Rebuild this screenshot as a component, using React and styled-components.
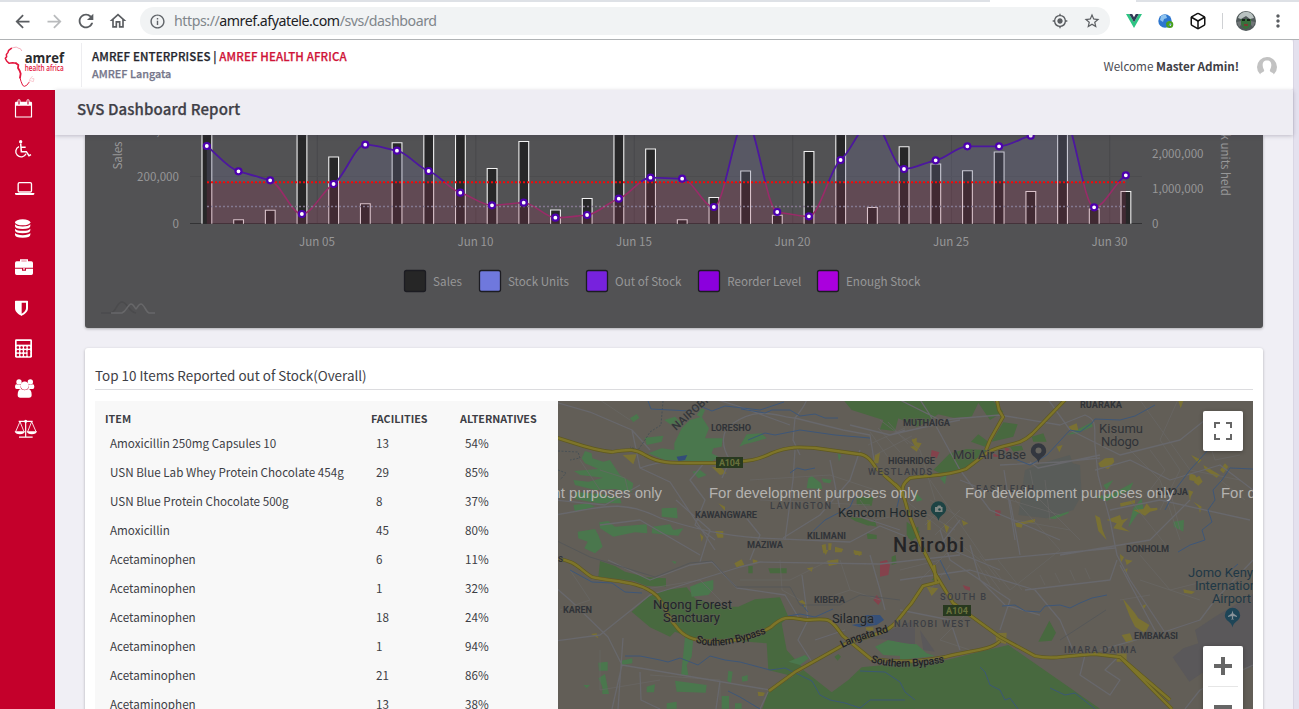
import React from "react";
import styled, { createGlobalStyle, css } from "styled-components";
import {
  MdArrowBack,
  MdArrowForward,
  MdRefresh,
  MdOutlineHome,
  MdInfoOutline,
  MdMyLocation,
  MdStarBorder,
  MdMoreVert,
} from "react-icons/md";
import { Box } from "lucide-react";

const SANS = `"Noto Sans CJK SC", "Noto Sans", sans-serif`;

const GlobalStyle = createGlobalStyle`
  * { box-sizing: border-box; }
  html, body { margin: 0; height: 100%; overflow: hidden; }
  body { font-family: ${SANS}; background: #efeef4; color: #3d3e45; }
  svg { display: block; }
`;

/* ---------- browser chrome ---------- */

const Window = styled.div`
  display: flex;
  flex-direction: column;
  width: 1299px;
  height: 709px;
  overflow: hidden;
`;

const TabEdge = styled.div`
  height: 2px;
  display: flex;
  background: #fff;
  flex: none;
`;

const TabStrip = styled.span`
  width: ${(p) => p.$w}px;
  margin-left: ${(p) => p.$gap || 0}px;
  background: #dee1e6;
`;

const BrowserBar = styled.div`
  height: 38px;
  flex: none;
  display: flex;
  align-items: center;
  padding: 1px 5px 0 6px;
  background: #fff;
  border-bottom: 1px solid #b0b3b5;
`;

const BarButton = styled.div`
  width: 32px;
  height: 30px;
  display: flex;
  align-items: center;
  justify-content: center;
  color: ${(p) => p.$color || "#5a5d61"};
`;

const AddressPill = styled.div`
  flex: 1;
  height: 28px;
  margin: 0 8px 0 6px;
  padding: 0 2px 0 9px;
  border-radius: 14px;
  background: #f1f3f4;
  color: #5f6368;
  display: flex;
  align-items: center;
`;

const Url = styled.div`
  flex: 1;
  margin-left: 8px;
  font: 14.2px/20px "Noto Sans", sans-serif;
  letter-spacing: -0.45px;
  color: #80868b;
  b { font-weight: 400; color: #202124; }
`;

const BarDivider = styled.div`
  width: 1px;
  height: 16px;
  margin: 0 7px 0 8px;
  background: #cfd1d4;
`;

/* ---------- application shell ---------- */

const Page = styled.div`
  flex: 1;
  min-height: 0;
  display: flex;
`;

const Workspace = styled.div`
  flex: 1;
  min-width: 0;
  display: flex;
  flex-direction: column;
`;

const ScrollGutter = styled.div`
  width: 6px;
  background: #e4e1ee;
  border-left: 1px solid #d9d6e4;
`;

const Header = styled.header`
  height: 50px;
  flex: none;
  display: flex;
  align-items: center;
  background: #fff;
  border-radius: 0 3px 3px 0;
`;

const LogoBox = styled.div`
  width: 82px;
  height: 44px;
  border-right: 1px solid #ededf0;
`;

const Company = styled.div`
  flex: 1;
  padding: 0 0 1px 10px;
  display: flex;
  flex-direction: column;
`;

const CompanyLine = styled.div`
  font-size: ${(p) => (p.$muted ? 10.8 : 11.5)}px;
  line-height: 17px;
  font-weight: 500;
  color: ${(p) => (p.$muted ? "#75768a" : "#25262e")};
  -webkit-text-stroke: 0.25px currentColor;
  letter-spacing: ${(p) => (p.$muted ? 0.02 : 0.12)}px;
  white-space: pre;
  em { font-style: normal; color: #cf1338; }
`;

const Welcome = styled.div`
  font-size: 11.7px;
  letter-spacing: -0.02px;
  line-height: 18px;
  color: #4a4b52;
  margin: 2px 18px 0 0;
  b { font-weight: 700; color: #3f4046; }
`;

const UserIcon = styled.svg`
  width: 20px;
  height: 20px;
  margin: 3px 16px 0 0;
`;

const Body = styled.div`
  flex: 1;
  min-height: 0;
  display: flex;
`;

const Sidebar = styled.nav`
  width: 55px;
  flex: none;
  background: #c4002b;
`;

const SideItem = styled.div`
  height: 40px;
  padding-left: 12px;
  color: #fff;
`;

const Main = styled.main`
  flex: 1;
  min-width: 0;
  display: flex;
  flex-direction: column;
`;

const TitleBar = styled.div`
  height: 45px;
  flex: none;
  padding: 7px 0 0 22px;
  background: #eeedf3;
  box-shadow: 0 1px 4px rgba(60, 55, 80, 0.28);
  position: relative;
  z-index: 1;
  font-size: 15px;
  letter-spacing: 0.13px;
  -webkit-text-stroke: 0.25px currentColor;
  line-height: 24px;
  font-weight: 500;
  color: #3f4047;
`;

const Content = styled.div`
  flex: 1;
  min-height: 0;
  overflow: hidden;
  padding: 0 30px;
  background: #f0eff5;
`;

const cardShadow = css`
  box-shadow: 0 1px 3px rgba(0, 0, 0, 0.28);
`;

const ChartCard = styled.section`
  height: 193px;
  background: #525254;
  border-radius: 0 0 3px 3px;
  overflow: hidden;
  ${cardShadow}
`;

const Card = styled.section`
  margin-top: 20px;
  height: 400px;
  padding: 15px 10px 0;
  background: #fff;
  border-radius: 3px;
  ${cardShadow}
`;

const CardTitle = styled.h4`
  margin: 0 0 11px;
  height: 27px;
  font-size: 13.43px;
  line-height: 24px;
  font-weight: 400;
  border-bottom: 1px solid #dcdcdf;
`;

const Split = styled.div`
  display: flex;
  height: 340px;
`;

const Table = styled.div`
  width: 463px;
  flex: none;
  padding: 9px 10px 0;
  background: #f8f8f8;
`;

const Row = styled.div`
  display: grid;
  grid-template-columns: 266px 89px 1fr;
  align-items: center;
  height: ${(p) => (p.$head ? 18 : 29)}px;
  padding-left: ${(p) => (p.$head ? 0 : 5)}px;
  font-size: ${(p) => (p.$head ? 10.75 : 11.65)}px;
  font-weight: ${(p) => (p.$head ? 700 : 400)};
  line-height: 18px;
  white-space: nowrap;
`;

const MapBox = styled.div`
  flex: 1;
  position: relative;
  overflow: hidden;
  background: #625e57;
`;

const MapControl = styled.div`
  position: absolute;
  right: 10px;
  top: ${(p) => p.$top}px;
  width: 40px;
  height: ${(p) => p.$h}px;
  background: #fff;
  border-radius: 2px;
  box-shadow: 0 1px 4px rgba(0, 0, 0, 0.3);
  color: #666;
`;

/* ---------- sidebar icons ---------- */

const RED = "#c4002b";
const line = { fill: "none", stroke: "currentColor", strokeWidth: 4 };

const sideIcons = [
  <g key="calendar">
    <path d="M10.5 40H58.5V81H10.5Z" {...line} strokeWidth="3.5" strokeLinejoin="round" />
    <path d="M9 38q0-3 3-3H57q3 0 3 3v9H9z" />
    <path d="M21 32V42M48 32V42" stroke="currentColor" strokeWidth="9" strokeLinecap="round" />
    <path d="M21 32V42M48 32V42" stroke={RED} strokeWidth="3.5" strokeLinecap="round" />
  </g>,
  <g key="wheelchair">
    <circle cx="26" cy="35" r="5" />
    <path d="M26 40L28 65H43L51 77L57 74M27 52H41" {...line} strokeWidth="4.5" />
    <path d="M21 50A16 16 0 1 0 42 71" {...line} />
  </g>,
  <g key="laptop">
    <rect x="18.500" y="38" width="40" height="28" rx="4" {...line} />
    <path d="M9 69H67V72Q67 75 62 75H14Q9 75 9 72Z" />
  </g>,
  <g key="database">
    <ellipse cx="32" cy="37" rx="23" ry="9" />
    {[43, 56, 69].map((y) => (
      <path key={y} d={`M9 ${y}q6 6.500 23 6.500t23-6.500v5q0 9-23 9t-23-9z`} />
    ))}
  </g>,
  <g key="briefcase">
    <path d="M26 36V30H46V36" {...line} />
    <path d="M9 39q0-5 5-5H58q5 0 5 5V53H9ZM9 56H30v6H42v-6H63V70q0 5-5 5H14q-5 0-5-5z" />
    <path d="M34 54h4v5h-4z" />
  </g>,
  <path
    key="shield"
    fillRule="evenodd"
    d="M9 34Q9 32 11 32H46Q48 32 48 34V55C48 67 36 74 28.500 78C21 74 9 67 9 55ZM29 38V71C35 68 42 63 42 55V38Z"
  />,
  <g key="calculator">
    <rect x="9" y="28" width="51" height="55" rx="4" />
    <path d="M14 33H55V44H14Z" fill={RED} />
    {[49, 60, 71].map((y) =>
      [14, 25, 36, 47].map((x) => (
        <rect key={`${x}-${y}`} x={x} y={y} width="7.500" height="7.500" rx="3" fill={RED} />
      ))
    )}
    <rect x="47" y="60" width="7.500" height="18.500" rx="3" fill={RED} />
  </g>,
  <g key="users">
    <circle cx="21" cy="36" r="8" />
    <circle cx="55" cy="36" r="8" />
    <path d="M9 50Q9 43 14 43Q20 47 27 44Q23 52 28 57H14Q9 57 9 50ZM67 50Q67 43 62 43Q56 47 49 44Q53 52 48 57H62Q67 57 67 50Z" />
    <circle cx="38" cy="47" r="12.500" />
    <path d="M17 75Q17 58 27 57Q38 64 49 57Q59 58 59 75Q59 83 51 83H25Q17 83 17 75Z" />
  </g>,
  <g key="balance">
    <path d="M41 34V81M20 34H62M21 81.500H62" {...line} strokeWidth="3.500" />
    <circle cx="41" cy="34" r="4.500" />
    <path d="M24 35L11 65M24 35L36 65M59 35L47 65M59 35L72 65" {...line} strokeWidth="2.600" />
    <path d="M8 64H39Q37 73 23.500 73T8 64ZM44 64H75Q73 73 59.500 73T44 64Z" />
  </g>,
];

/* ---------- header logo ---------- */

function Logo() {
  return (
    <svg width="81" height="47" viewBox="0 127 243 141">
      <g fill="none" strokeLinecap="round" strokeLinejoin="round" stroke="#e3173e">
        <path d="M65 150L61 144L53 142L50 139L40 141L34 143" strokeWidth="2" stroke="#ef8297" />
        <path d="M34 143L26 149L24 155L19 162L20 168L16 173L20 181L27 188L38 186L48 188" strokeWidth="4.500" />
        <path d="M48 188L55 193L54 202L59 210L62 219L60 231" strokeWidth="5.500" />
        <path d="M60 231L63 242L68 254L73 257L80 254L87 245" strokeWidth="3" />
        <path d="M87 245L90 235L97 227M91 240L100 243L102 234L96 234" strokeWidth="1.800" stroke="#f5a9b6" />
      </g>
      <text x="74" y="187" textLength="118" lengthAdjust="spacingAndGlyphs" fontFamily="Open Sans, sans-serif" fontWeight="700" fontSize="45" fill="#2b2a2c">amref</text>
      <text x="74" y="211" textLength="117" lengthAdjust="spacingAndGlyphs" fontFamily="Open Sans, sans-serif" fontWeight="600" fontSize="24" fill="#e3173e">health africa</text>
    </svg>
  );
}

/* ---------- sales / stock chart ---------- */

const BASE = 223.7;
const barTops = [
  120, 219.7, 210.3, 120, 157, 203.7, 142.7, 120, 120, 168.5, 141.5, 210, 198.5, 120, 149,
  219.7, 197.5, 171, 215.3, 151.5, 120, 207.5, 146.7, 164, 170.7, 152, 191.5, 120, 209, 191.5,
];
const stock = [
  146, 171.3, 180.3, 214, 184, 144.7, 150.7, 171, 192.7, 205.3, 202.7, 217.7, 215, 198.7, 177.7,
  178.7, 207, 120, 212, 216.3, 160, 121, 169, 160.3, 146.3, 146.3, 135.7, 114, 207.3, 175.3,
];
const STEP = 31.69;
const px = (i) => 206.8 + STEP * i;

/* Monotone cubic interpolation through the daily points; flat at local extremes. */
function curve(ys) {
  const d = ys.slice(1).map((y, i) => y - ys[i]);
  const m = ys.map((_, i) => {
    if (i === 0 || i === ys.length - 1) return i === 0 ? d[0] : d[d.length - 1] * 0.6;
    const a = d[i - 1];
    const b = d[i];
    return a * b <= 0 ? 0 : Math.sign(a) * Math.min(Math.abs(a), Math.abs(b), Math.abs(a + b) / 4);
  });
  return ys.reduce((path, y, i) => {
    if (i === 0) return `M${px(0)} ${y}`;
    return `${path}C${px(i - 1) + STEP / 3} ${ys[i - 1] + m[i - 1] / 3} ${px(i) - STEP / 3} ${y - m[i] / 3} ${px(i)} ${y}`;
  }, "");
}

const legend = [
  [404.5, "#262626", "Sales", 433, 29],
  [479.5, "#6f78dd", "Stock Units", 508, 61],
  [586.5, "#7722dd", "Out of Stock", 615, 66.5],
  [698.5, "#8b00dd", "Reorder Level", 727.3, 74],
  [817.5, "#aa00dd", "Enough Stock", 846, 74.5],
];

function Chart() {
  const path = curve(stock);
  const area = `${path}L${px(29)} ${BASE}L${px(0)} ${BASE}Z`;
  return (
    <svg width="1178" height="193" viewBox="85 135 1178 193" fontFamily={SANS} fontSize="11.600" fill="#979798">
      <defs>
        <clipPath id="above"><rect x="85" y="100" width="1178" height="82" /></clipPath>
        <clipPath id="below"><rect x="85" y="182" width="1178" height="60" /></clipPath>
      </defs>
      {[317.3, 475.8, 634.3, 792.7, 951.5, 1109.700].map((x) => (
        <path key={x} d={`M${x} 130V223`} stroke="#49494b" />
      ))}
      <path d="M190 176.500H1142" stroke="#4c4c4e" />
      <path d="M190 223.500H1142" stroke="#333335" />
      {barTops.map((t, i) => (
        <path key={i} d={`M${px(i) - 4.8} ${BASE}V${t}h9.800V${BASE}`} fill="#272728" stroke="#f2f2f2" strokeWidth="1.100" />
      ))}
      <path d={area} clipPath="url(#above)" fill="#67678c" fillOpacity="0.300" />
      <path d={area} clipPath="url(#below)" fill="#8e3552" fillOpacity="0.250" />
      <path d={path} clipPath="url(#above)" fill="none" stroke="#4c179f" strokeWidth="1.800" />
      <path d={path} clipPath="url(#below)" fill="none" stroke="#992b68" strokeWidth="1.600" />
      <path d="M207 206.500H1126" stroke="#83788f" strokeWidth="1.700" strokeDasharray="2 2" />
      <path d="M207 182.200H1126" stroke="#f50808" strokeWidth="2" strokeDasharray="2 2" />
      {stock.map((y, i) => (
        <circle key={i} cx={px(i)} cy={y} r="3" fill="#fff" stroke="#4d00ae" strokeWidth="2.200" />
      ))}
      <text x="137" y="181" textLength="42">200,000</text>
      <text x="137" y="134.500" textLength="42">400,000</text>
      <text x="179" y="228" textAnchor="end">0</text>
      <text x="1152" y="158" textLength="51.500">2,000,000</text>
      <text x="1152" y="193" textLength="51.500">1,000,000</text>
      <text x="1152" y="228">0</text>
      <text transform="translate(122 169.500) rotate(-90)" textLength="28">Sales</text>
      <text transform="translate(1221 196) rotate(90)" textAnchor="end">Stock units held</text>
      {["05", "10", "15", "20", "25", "30"].map((d, i) => (
        <text key={d} x={299 + 158.500 * i} y="246" textLength="36">{`Jun ${d}`}</text>
      ))}
      {legend.map(([x, color, label, tx, w]) => (
        <g key={label}>
          <rect x={x} y="270.500" width="21" height="21" rx="2" fill={color} stroke="#1c1c22" strokeWidth="1.300" />
          <text x={tx} y="286" textLength={w}>{label}</text>
        </g>
      ))}
      <g fill="none" strokeWidth="1.600">
        <path d="M101 313H111C116 312 117 302 122 302S129 312 136 313" stroke="#4b4b4d" />
        <path d="M111 313H122C127 311 128 304 131 304S135 309 136 309S138 304 141 304C144 304 146 312 149 313H155" stroke="#676769" />
      </g>
    </svg>
  );
}

/* ---------- map ---------- */

const G1 = "#4a774d";
const G2 = "#48693f";
const Y = "#7a7133";
const R = "#84424c";

const Quadrant = ({ x, y, children }) => (
  <g transform={`translate(${x} ${y}) scale(0.33333)`}>{children}</g>
);

const labelStroke = { stroke: "#625e57", strokeOpacity: 0.6, strokeWidth: 1.5, paintOrder: "stroke" };

const Label = ({ x, y, w, size = 9.2, weight = 700, color = "#303338", rotate, children }) => (
  <text
    x={rotate ? undefined : x}
    y={rotate ? undefined : y}
    transform={rotate ? `translate(${x} ${y}) rotate(${rotate})` : undefined}
    textLength={w}
    fontSize={size}
    fontWeight={weight}
    fill={color}
    {...labelStroke}
  >
    {children}
  </text>
);

const RoadName = ({ id, d, w, children }) => (
  <>
    <path id={id} d={d} fill="none" />
    <text fontSize="10.500" fontWeight="500" fill="#202225" {...labelStroke}>
      <textPath href={`#${id}`} textLength={w}>{children}</textPath>
    </text>
  </>
);

const Pin = ({ x, y, color, children }) => (
  <g transform={`translate(${x} ${y})`}>
    <path d="M0 12C-.8 6-7.700 5.500-7.700 0A7.700 7.700 0 0 1 7.700 0C7.700 5.500 .8 6 0 12Z" fill={color} />
    <g transform="translate(0 6)">{children}</g>
  </g>
);

const highways = [
  "M555 437C575 443 590 450 612 452C630 449 636 449 645 455C660 464 670 463 715 463C752 462 760 459 772 453C790 446 800 447 815 448L858 454C867 454 872 462 876 468L900 489",
  "M996 396L999 410L1003 417L990 440L986 450M1065 400L1032 434C1018 447 1008 442 988 452L966 469C945 477 925 475 910 478C902 484 902 488 903 495",
  "M895 484C903 491 905 500 908 512L921 545L936 575L953 603L1000 637L1035 656C1055 660 1070 655 1095 654L1120 657L1172 709M1120 657L1170 700",
  "M555 559C575 559 580 570 592 577C612 582 640 580 657 596C667 608 668 618 675 625C684 638 694 640 708 641C746 643 762 632 771 627C785 614 790 618 807 620C832 618 830 619 843 636L871 659C910 664 925 660 945 657C970 650 990 651 1000 641",
  "M769 691L795 672L845 644L880 633C895 628 900 616 911 604L923 586L939 582",
  "M934 565L936 583",
];

const minorRoads = [
  "M555 402L590 412L632 430L650 450M632 430L640 468L670 482L715 550M640 468C680 455 680 465 700 462M722 478L730 460C720 445 722 430 732 424C760 404 780 418 795 418C810 400 806 398 808 395M795 418L793 440L800 455M795 418L843 430L870 435L874 460M795 450L793 480L785 540M700 395L735 405L790 425M850 425L890 435L905 430M890 435L920 428L960 420",
  "M555 515C600 508 620 498 660 518C700 530 720 535 760 538L850 542L880 526L905 536M676 500L710 530L700 562M740 510L760 535L750 560M600 525L640 520L700 555M705 462L690 480L705 500L695 525L715 540M783 538L820 515L850 480L860 450M830 460L840 510L900 530M555 500L605 505L640 485",
  "M555 587L570 600L608 637L622 665L770 690M555 641L600 635L650 595L740 567L760 562L880 564L960 555M608 560L650 580L690 565L712 562L737 588L785 595L800 620M622 665L612 709M623 638L618 709M640 672L641 700L660 709M720 681L716 709M768 692L760 709M802 575L808 620L798 640L812 662M870 555L880 590L885 610M815 640L845 630",
  "M917 395L930 415L960 470L990 510L1060 540M900 400L940 420L1000 415L1060 425L1085 415C1098 420 1094 428 1095 445L1098 475L1110 520L1117 555L1130 580L1170 640M1045 395L1070 430L1120 455L1180 440L1205 420M1030 462L1038 468L1100 455M1000 465L1060 462L1100 458M1095 470L1130 460L1170 480L1220 465L1253 490M1110 510L1160 500L1250 520M1004 470L1015 540M960 480L1010 500L1020 555M960 520L940 545L1000 570",
  "M900 580L970 570L1035 590L1060 620L1075 655M970 545L980 580L1005 605L1040 615M900 610L950 620L960 650M985 560L1115 548M1025 590L1110 580L1117 560M1120 565L1160 640M1100 650L1170 630L1200 620L1215 600L1253 560M1085 655L1080 675L1110 695L1120 680L1105 670L1120 655M1253 665L1200 690L1185 709M1060 555L1150 540L1190 500M940 530L950 560L1010 600L1000 630",
];

const texture = [
  "M580 460L600 490L640 495M570 570L590 600L560 610M630 420L600 400M750 480L830 475L875 490M760 500L870 505M740 580L790 580L830 560M880 420L920 450L935 500M905 500L980 560M930 480L985 560M1110 430L1160 480L1180 540M1140 400L1190 470L1240 480M1130 500L1170 550M1170 490L1180 530M1180 395L1160 440L1180 470L1160 510M1015 500L1060 550L1010 590M1030 490L1080 540M1140 580L1200 600M1140 555L1170 590L1210 580",
  "M640 590L700 580L730 610M600 650L600 690L660 680M650 675L720 680L720 700M820 600L850 590L880 600M840 560L850 590M985 570L1000 590M990 565L1010 590M998 560L1022 590M1040 575L1045 585M1055 573L1060 583M1070 570L1075 581M1085 568L1090 579M940 560L920 580M950 565L930 590M970 610L940 640L970 650M900 570L940 560L960 540M1120 600L1150 595",
  "M870 432L890 460M878 428L900 452M888 422L908 444M868 445L905 428M875 455L912 436M1010 500L1060 515M1015 520L1070 530M1030 470L1036 500M1045 480L1050 520M920 510L955 530M930 500L965 520M925 525L945 505M935 535L960 510M975 560L990 585M980 556L1000 582M600 470L625 478L630 500M780 560L782 590L800 600M860 500L875 520L900 515M1205 430L1215 460L1240 455M1220 480L1245 500M1150 450L1165 470L1150 490",
];

const watermarkX = [453, 709, 965, 1221];

function MapDrawing() {
  return (
    <svg width="695" height="308" viewBox="558 401 695 308" fontFamily="Roboto, sans-serif">
      <rect x="558" y="401" width="695" height="308" fill="#625e57" />
      <Quadrant x={555} y={395}>
        <g fill={G1}>
          <path d="M270 128L325 122L320 140L275 150ZM328 75L360 65L385 90L360 98ZM225 70L245 57L253 68L235 82ZM358 145L380 100L405 75L440 65L462 100L450 130L503 130L500 155L475 160L470 175L490 185L470 200L330 195L280 175L320 160L358 165ZM425 60L440 40L450 45L440 68ZM553 155L575 118L620 115L635 130L600 140L570 148Z" />
          <path d="M80 190L90 168L110 175L112 190L145 200L165 195L195 240L235 265L230 292L180 282L120 285L60 270L55 255L100 260L145 248L75 240L57 228L130 222L90 205ZM60 290L140 298L195 310L200 325L130 325L60 312ZM55 330L100 325L120 335L60 350ZM68 410L120 402L130 420L143 455L120 475L88 460L98 440L70 430ZM133 382L160 378L180 395L275 388L277 415L240 412L175 425L135 400ZM320 340L365 338L368 370L320 365ZM292 395L345 388L355 405L385 400L370 422L290 415ZM412 230L435 225L455 240L430 250ZM760 250L770 242L798 265L802 282L755 280ZM800 250L830 255L825 265L805 262ZM848 175L858 180L852 200Z" />
        </g>
        <g fill={G2}>
          <path d="M868 18H1200L1120 80L1085 95L1030 70L1020 108L975 103L985 75L890 45ZM905 305L955 305L950 332L905 330ZM940 390L960 375L965 395ZM1060 410L1090 395V430H1060ZM880 365L920 370L960 385L940 392L900 378ZM935 415L965 420V432H938Z" />
        </g>
        <g fill={Y}>
          <path d="M203 180L245 178L235 208ZM470 215L500 220L515 235L495 240ZM480 408H505V428H488ZM490 325L510 335V348ZM435 415L445 425L440 440ZM800 450L812 447L815 475H805ZM820 445L830 445L828 465H820ZM840 455L865 462L860 472H840ZM895 465L920 470V480H900ZM960 180L975 172L970 205H955ZM1070 135L1085 128V165Z" />
        </g>
        <path fill="#334c79" d="M365 185L397 180L390 195L370 198Z" />
      </Quadrant>
      <Quadrant x={900} y={395}>
        <g fill={G2}>
          <path d="M0 18H280L310 50L270 75L235 24L215 65L160 68L100 55L50 38L0 30ZM275 140L310 82L353 88L340 125ZM213 140L235 118L265 140L255 155ZM100 225L150 175L200 162L260 165L240 190L190 225L120 235ZM395 125L430 115L440 140H400ZM20 380L60 410L35 440L20 420ZM330 155L365 152L370 165L340 170Z" />
        </g>
        <g fill={G1}>
          <path d="M445 370L510 340L505 355L465 372ZM500 120L575 82L578 95L530 115ZM585 305L640 295L700 262L690 285L620 318ZM610 270L640 255L620 285ZM700 340L725 310L732 350L712 358L685 398ZM820 380L852 375L850 410L822 395ZM120 250L140 240L135 268ZM45 290L68 315L50 320Z" />
          <path fill="#595c59" d="M375 225L440 200L510 180L518 205L540 210L545 300L520 345L440 370L355 360Z" />
        </g>
        <g fill={Y}>
          <path d="M35 130L50 142L65 145L50 170L30 155L45 152ZM505 95L530 85L535 105L515 108ZM470 155L488 150L478 172ZM595 205L615 190L640 188L643 200L625 222L600 215ZM345 385L405 372V382L368 388L365 398L350 395ZM585 360L600 368L608 405L620 435L595 408ZM620 375L660 360L665 375L685 370L670 385L665 395L690 410L640 400L650 385ZM700 345L730 342L740 325L752 340L772 338V345L750 350L735 362ZM873 180L905 195L895 205ZM868 235L885 240L890 248L882 258L868 255ZM910 210L960 240L950 248L915 225ZM960 225L975 205L985 215L970 235ZM885 250L898 242L908 260L895 272L882 262ZM865 285L880 290L872 305L870 320ZM880 320L905 335L900 355L895 335ZM185 375L205 385L190 392ZM82 375H92V405H82ZM130 385L148 395L140 415ZM660 325L705 315V325L662 335ZM835 18H850L842 40Z" />
        </g>
        <path fill={R} d="M95 165L118 172L110 190L92 185ZM285 345L302 347L300 363L287 362ZM280 175L300 185H280ZM310 155L330 162L320 170Z" />
      </Quadrant>
      <Quadrant x={555} y={550}>
        <g fill={G2}>
          <path d="M135 33L180 48L210 65L275 82L333 85V110L275 108L235 92L130 80ZM230 185L280 140L330 120L395 112L420 145L500 170L550 170L600 148L675 142L700 200L680 220L695 300L740 350L720 380L640 360L635 280L575 275L440 275L360 245L345 260L285 232ZM640 55H695V70H645ZM580 48H593V70H580ZM1010 20L1022 15L1025 40L1010 45ZM622 476L640 425L745 360L830 427L880 390L920 352L1080 335V476ZM838 320L850 312L858 320L848 332Z" />
        </g>
        <g fill={G1}>
          <path d="M390 262L415 265L410 320L395 345L400 375L378 378ZM405 110L435 98L475 90V118L460 135L410 140ZM360 392L455 405L452 428L365 425ZM130 338L158 335V362H132ZM130 385L150 372L162 432H142V410ZM195 333L232 325V340L200 345ZM85 405L105 405L95 415ZM275 410L300 403L297 427H275ZM335 460L365 455V476H335ZM500 438H522V476H500ZM520 362L533 365L528 400L517 392ZM560 380L578 375V392L562 395ZM700 335L750 315L762 325L735 345ZM540 460H560V476H540ZM960 290L1000 270L1080 285V320L985 315ZM350 33L365 35L360 42Z" />
          <path fill="#5a585a" d="M945 265L1080 210V285L1000 270Z" />
        </g>
        <g fill={Y}>
          <path d="M538 40L560 28L568 45L545 52ZM593 28L608 32L605 42H594ZM730 155L742 150L758 165L745 175L748 163ZM755 55L775 52L770 65ZM815 32L850 28V42L822 48ZM805 0L820 0L812 15ZM893 8L920 5L915 18ZM108 252L125 250L130 265ZM608 425L630 428L625 438H610ZM932 232L955 232V242H935Z" />
        </g>
        <path fill={R} d="M975 35L995 30L1005 45L1000 75L975 80ZM955 150L965 135L978 152L970 165Z" />
        <path fill="#365078" d="M890 225L925 218L930 195L975 195L987 210L965 225L915 232Z" />
      </Quadrant>
      <Quadrant x={900} y={550}>
        <path fill={G2} d="M0 350L140 330L240 305L325 285L390 330L600 476H0Z" />
        <path fill={G1} d="M0 280L50 283L80 310L105 318L0 330Z" />
        <path fill={G2} d="M415 275L448 212L468 248L455 272ZM95 90L112 72L122 92Z" />
        <path fill="#5a585a" d="M818 322L850 295L895 280L885 240L945 200L1062 130V350L920 360L868 395ZM60 240L105 305L70 300Z" />
        <g fill={Y}>
          <path d="M668 145L705 190L715 205L748 225L735 250L705 230L690 200ZM665 255L690 250L700 275L680 280ZM650 310H680V335H650ZM285 250L320 248L318 282L290 275ZM80 110L115 115L95 138ZM850 118L885 125L875 132L852 128ZM725 168L740 162L730 180ZM675 28L698 32L680 45ZM660 12L672 22L662 40ZM670 60L683 55L680 68Z" />
        </g>
        <path fill={R} d="M188 105L210 112V122L195 118Z" />
      </Quadrant>

      <g fill="none" stroke="#696766" strokeWidth="0.700">
        {texture.map((d) => <path key={d} d={d} />)}
      </g>
      <g fill="none" stroke="#68686c" strokeWidth="1.300" strokeLinejoin="round">
        {minorRoads.map((d) => <path key={d} d={d} />)}
      </g>
      <g fill="none" stroke="#3d4a55" strokeWidth="0.700">
        <path d="M663 401L661 425L650 432L645 440L638 450L630 447M558 451L578 452L580 458L570 460M558 470L566 473L560 480" strokeDasharray="2 1.500" />
        <path d="M555 540L590 557L655 577L690 563L712 561L736 587L790 587L800 605L840 605L860 595L900 600M1106 610L1060 640" stroke="#505459" />
      </g>
      <g fill="none" stroke="#3a567c" strokeWidth="0.900" strokeLinejoin="round">
        <path d="M648 401L651 409L690 411L700 406L712 411L725 406L760 410L784 402M741 409L765 413L772 410L790 410L800 416L815 414L825 418L838 418M748 440L765 433L775 435L800 430L835 435L870 438M790 473L797 468L805 470L815 468M855 496L850 507L825 520L810 534M570 570L592 582L612 583L625 592L642 593M788 616L800 614L815 617L833 609" />
        <path d="M625 656L640 656L660 660L668 662L680 658L698 665L710 656L725 660L740 662L770 670L785 668L812 681L820 695L830 700L845 703L860 708L870 700L905 700M860 671L885 672L900 682L905 692L915 700M728 691L740 697L760 709M802 605L808 612M980 667L985 672L990 685L1000 690L1005 700L1010 698L1018 709M1050 688L1065 695L1075 693L1095 709" />
        <path d="M1005 455L1030 465L1047 455L1070 430L1080 432L1092 423L1095 419L1120 420L1135 416L1155 405M1002 606L1015 605L1025 611L1040 612L1045 606L1060 605L1070 608L1080 603L1092 598L1107 595M1208 450L1190 470L1175 490L1165 510M1253 469L1230 468L1222 480L1213 490L1215 500L1208 510L1212 522L1202 530L1205 540L1190 545L1178 552M900 495L895 515M940 560L950 580M1225 575L1238 564" />
      </g>
      <g fill="none" stroke="#5f5920" strokeWidth="3.800">
        {highways.map((d) => <path key={d} d={d} />)}
      </g>
      <g fill="none" stroke="#7e7529" strokeWidth="2.400">
        {highways.map((d) => <path key={d} d={d} />)}
      </g>

      {[[716, 457, 27], [943, 605, 28]].map(([x, y, w]) => (
        <g key={x}>
          <rect x={x} y={y} width={w} height="11" fill="#28391f" />
          <text x={x + 3} y={y + 9} fontSize="9" fontWeight="700" fill="#68713c" textLength={w - 6}>A104</text>
        </g>
      ))}

      <Label x={676} y={431} w={44} size={11} rotate={-42} weight={500} color="#33363a">NAIROBI</Label>
      <Label x={711} y={430.500} w={40}>LORESHO</Label>
      <Label x={903} y={425.500} w={47}>MUTHAIGA</Label>
      <Label x={1080} y={407.500} w={42}>RUARAKA</Label>
      <Label x={888} y={463.500} w={47}>HIGHRIDGE</Label>
      <Label x={868} y={475} w={64} weight={500} color="#3c3e44">WESTLANDS</Label>
      <Label x={770} y={509} w={61} weight={500} color="#3c3e44">LAVINGTON</Label>
      <Label x={695} y={518} w={62}>KAWANGWARE</Label>
      <Label x={747} y={547.500} w={36}>MAZIWA</Label>
      <Label x={807} y={539} w={39}>KILIMANI</Label>
      <Label x={976} y={492} w={58} weight={500} color="#3c3e44">EASTLEIGH</Label>
      <Label x={1157} y={495} w={31}>UMOJA</Label>
      <Label x={1126} y={552} w={43}>DONHOLM</Label>
      <Label x={563} y={613} w={29}>KAREN</Label>
      <Label x={814} y={603} w={31}>KIBERA</Label>
      <Label x={894} y={627} w={76} weight={500} color="#3c3e44">NAIROBI WEST</Label>
      <Label x={940} y={600} w={46} weight={500} color="#3c3e44">SOUTH B</Label>
      <Label x={1134} y={639} w={44}>EMBAKASI</Label>
      <Label x={1064} y={653} w={72} weight={500} color="#3c3e44">IMARA DAIMA</Label>
      <Label x={1099} y={432.500} w={44} size={13} weight={400}>Kisumu</Label>
      <Label x={1101} y={445.500} w={38} size={13} weight={400}>Ndogo</Label>
      <Label x={953} y={458.500} w={73} size={13} weight={400}>Moi Air Base</Label>
      <Label x={838} y={516.500} w={89} size={13} weight={400} color="#20282c">Kencom House</Label>
      <Label x={893} y={551.500} w={71} size={20} weight={500} color="#242426">Nairobi</Label>
      <Label x={653} y={608.500} w={79} size={13} weight={400} color="#20252a">Ngong Forest</Label>
      <Label x={663} y={621.500} w={57} size={13} weight={400} color="#20252a">Sanctuary</Label>
      <Label x={832} y={623} w={42} size={13} weight={400} color="#20252a">Silanga</Label>
      <Label x={1188} y={576.500} w={65} size={13} weight={400} color="#1f3846">Jomo Keny</Label>
      <Label x={1195} y={589.500} w={62} size={13} weight={400} color="#1f3846">Internation</Label>
      <Label x={1212} y={602.500} w={39} size={13} weight={400} color="#1f3846">Airport</Label>
      <RoadName id="bypass-west" w={73} d="M695.500 642C712 650 740 644 772 631">Southern Bypass</RoadName>
      <RoadName id="bypass-east" w={75} d="M870.500 662C888 668 915 669 950 661">Southern Bypass</RoadName>
      <RoadName id="langata" w={49} d="M842.500 648C858 639 875 637 895 630">Langata Rd</RoadName>
      <Label x={558} y={562} size={10} weight={500}>s</Label>

      <Pin x={1038.500} y={451} color="#33373f"><circle cx="0" cy="-6.500" r="3" fill="#66645f" /></Pin>
      <Pin x={938.500} y={509} color="#1d4344">
        <path d="M-3.500-3V-8H-1.500L-.5-9.500H2L3-8H4V-3Z" fill="#7f8783" />
        <circle cx="1" cy="-5.500" r="1.300" fill="#1d4344" />
      </Pin>
      <Pin x={1232.500} y={615.500} color="#1e4557">
        <path d="M0-11L.8-8L4.500-5.500V-4.500L.8-5.500L.5-3L1.600-2H-1.600L-.5-3L-.8-5.500L-4.500-4.500V-5.500L-.8-8Z" fill="#889299" />
      </Pin>

      <g fontFamily="Liberation Sans, Arial, sans-serif" fontSize="15.500" fill="#b4b2af">
        {watermarkX.map((x) => (
          <text key={x} x={x} y="497.500" textLength="209" lengthAdjust="spacingAndGlyphs">For development purposes only</text>
        ))}
      </g>
    </svg>
  );
}

/* ---------- table data ---------- */

const items = [
  ["Amoxicillin 250mg Capsules 10", 13, 54],
  ["USN Blue Lab Whey Protein Chocolate 454g", 29, 85],
  ["USN Blue Protein Chocolate 500g", 8, 37],
  ["Amoxicillin", 45, 80],
  ["Acetaminophen", 6, 11],
  ["Acetaminophen", 1, 32],
  ["Acetaminophen", 18, 24],
  ["Acetaminophen", 1, 94],
  ["Acetaminophen", 21, 86],
  ["Acetaminophen", 13, 38],
];

export default function App() {
  return (
    <Window>
      <GlobalStyle />
      <TabEdge>
        <TabStrip $w={990} />
        <TabStrip $w={163} $gap={146} />
      </TabEdge>
      <BrowserBar>
        <BarButton><MdArrowBack size={21} /></BarButton>
        <BarButton $color="#b9bbbd"><MdArrowForward size={21} /></BarButton>
        <BarButton><MdRefresh size={22} /></BarButton>
        <BarButton><MdOutlineHome size={20} /></BarButton>
        <AddressPill>
          <MdInfoOutline size={17} />
          <Url>https://<b>amref.afyatele.com</b>/svs/dashboard</Url>
          <BarButton><MdMyLocation size={16} /></BarButton>
          <BarButton><MdStarBorder size={18} /></BarButton>
        </AddressPill>
        <BarButton>
          <svg width="16" height="14" viewBox="0 0 16 14">
            <path d="M0 0H3.200L8 8.300L12.800 0H16L8 14Z" fill="#2fc584" />
            <path d="M3.200 0H6.200L8 3.200L9.800 0H12.800L8 8.300Z" fill="#2f3a56" />
          </svg>
        </BarButton>
        <BarButton>
          <svg width="16" height="15" viewBox="0 0 16 15">
            <circle cx="7" cy="7" r="6.700" fill="#2d76cf" />
            <path d="M3 2Q6 0 8 1L9 4L6 5L5 8L2 6ZM9 8L12 7L13 10L10 12Z" fill="#8ec3ee" />
            <circle cx="11.700" cy="10.500" r="2.600" fill="none" stroke="#49a01f" strokeWidth="2" />
            <path d="M8 9L12 8.500L11 12Z" fill="#49a01f" />
          </svg>
        </BarButton>
        <BarButton $color="#111"><Box size={18} strokeWidth={2} /></BarButton>
        <BarDivider />
        <BarButton>
          <svg width="20" height="20" viewBox="0 0 20 20">
            <circle cx="10" cy="10" r="10" fill="#50595a" />
            <path d="M2 7Q4 1 10 .8T18 7L14 8L10 5L5 8Z" fill="#b9c2c1" />
            <path d="M5 8H15V13Q13 18 10 18T5 13Z" fill="#38703c" />
            <path d="M6 8H9V10H6ZM11 8H14V10H11Z" fill="#152418" />
            <path d="M8 13H12V15H8Z" fill="#7d3a36" />
            <path d="M1 11L5 10V14L3 16ZM19 11L15 10V14L17 16Z" fill="#717678" />
          </svg>
        </BarButton>
        <BarButton><MdMoreVert size={20} /></BarButton>
      </BrowserBar>
      <Page>
        <Workspace>
          <Header>
            <LogoBox><Logo /></LogoBox>
            <Company>
              <CompanyLine>AMREF ENTERPRISES | <em>AMREF HEALTH AFRICA</em></CompanyLine>
              <CompanyLine $muted>AMREF Langata</CompanyLine>
            </Company>
            <Welcome>Welcome <b>Master Admin!</b></Welcome>
            <UserIcon viewBox="0 0 20 20">
              <circle cx="10" cy="10" r="10" fill="#c2c2c2" />
              <path d="M10 3.500C13.500 3.500 14.500 6 14.300 8.500C14.200 11 13 12 12.800 13.500C13 15.500 16 15 17 17.500L14 20H6L3 17.500C4 15 7 15.500 7.200 13.500C7 12 5.800 11 5.700 8.500C5.500 6 6.500 3.500 10 3.500Z" fill="#fff" />
            </UserIcon>
          </Header>
          <Body>
            <Sidebar>
              {sideIcons.map((icon) => (
                <SideItem key={icon.key}>
                  <svg width="26" height="40" viewBox="0 0 78 120" fill="currentColor">{icon}</svg>
                </SideItem>
              ))}
            </Sidebar>
            <Main>
              <TitleBar>SVS Dashboard Report</TitleBar>
              <Content>
                <ChartCard><Chart /></ChartCard>
                <Card>
                  <CardTitle>Top 10 Items Reported out of Stock(Overall)</CardTitle>
                  <Split>
                    <Table>
                      <Row $head><span>ITEM</span><span>FACILITIES</span><span>ALTERNATIVES</span></Row>
                      {items.map(([name, facilities, alternatives], i) => (
                        <Row key={i}>
                          <span>{name}</span>
                          <span>{facilities}</span>
                          <span>{alternatives}%</span>
                        </Row>
                      ))}
                    </Table>
                    <MapBox>
                      <MapDrawing />
                      <MapControl $top={10} $h={40}>
                        <svg width="40" height="40" viewBox="0 0 40 40" fill="none" stroke="currentColor" strokeWidth="2">
                          <path d="M12 17V12H17M23 12H28V17M28 23V28H23M17 28H12V23" />
                        </svg>
                      </MapControl>
                      <MapControl $top={245} $h={81}>
                        <svg width="40" height="81" viewBox="0 0 40 81" fill="currentColor">
                          <path d="M18 11H22V18H29V22H22V29H18V22H11V18H18Z" />
                          <path d="M5 40H35V41H5Z" fill="#e6e6e6" />
                          <path d="M11 59H29V63H11Z" />
                        </svg>
                      </MapControl>
                    </MapBox>
                  </Split>
                </Card>
              </Content>
            </Main>
          </Body>
        </Workspace>
        <ScrollGutter />
      </Page>
    </Window>
  );
}
